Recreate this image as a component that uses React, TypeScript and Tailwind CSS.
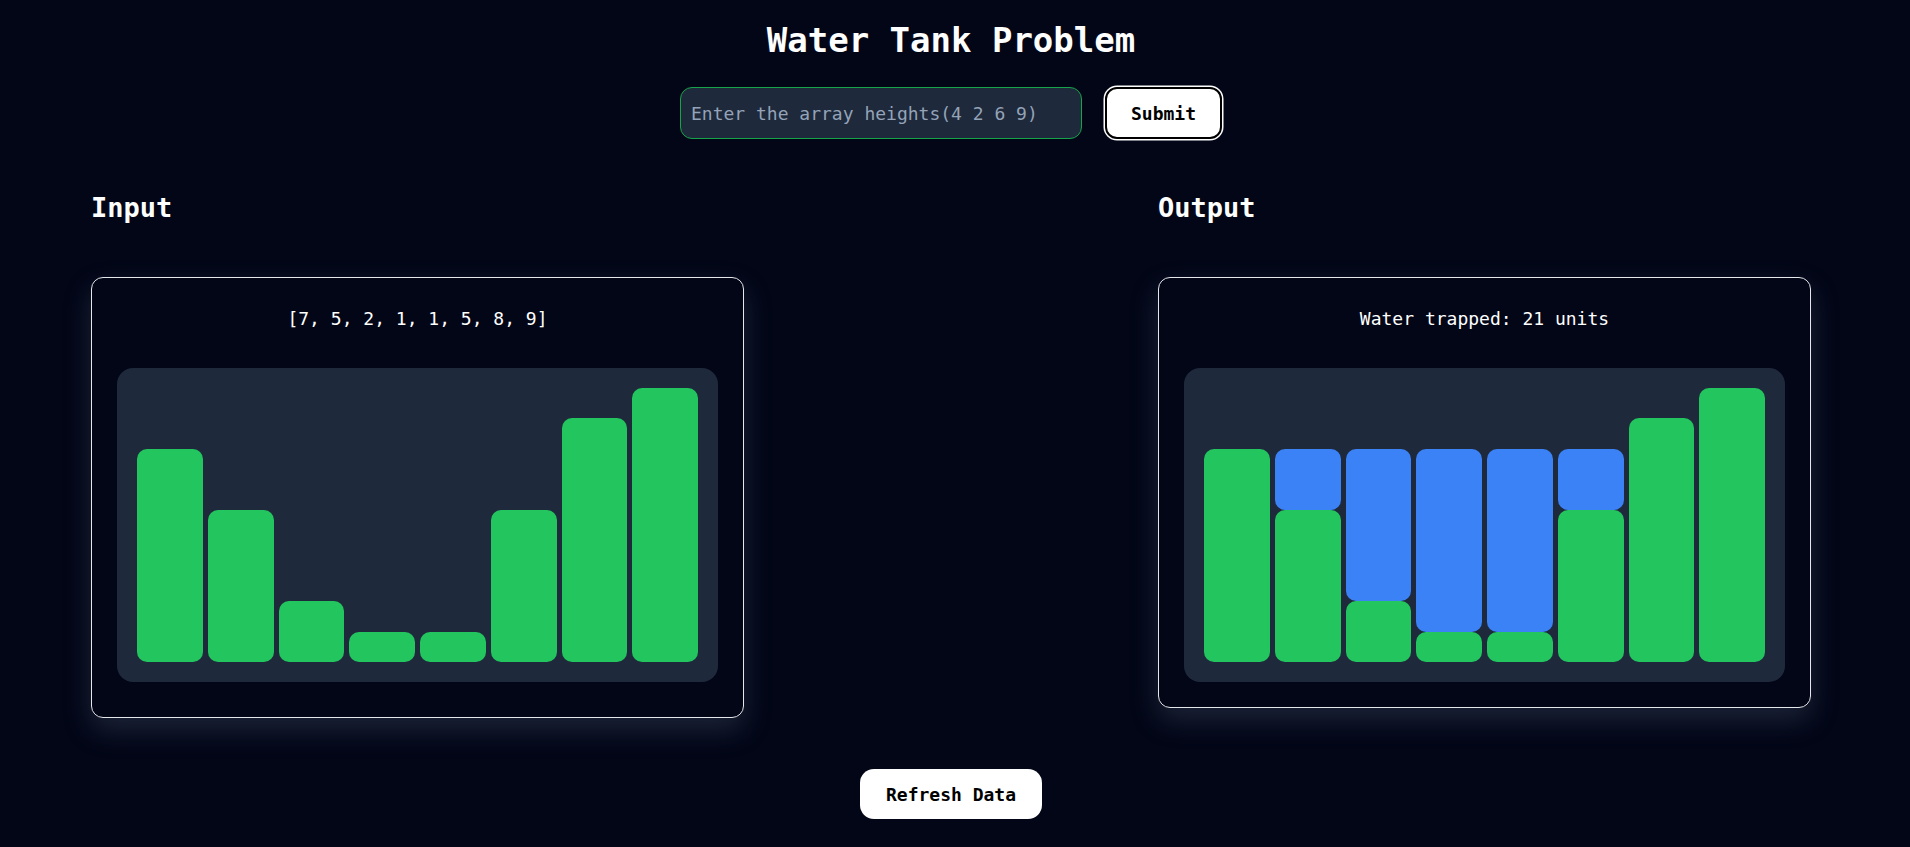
import React from "react";

const HEIGHTS = [7, 5, 2, 1, 1, 5, 8, 9];

function computeWater(h: number[]): number[] {
  const n = h.length;
  const left: number[] = new Array(n).fill(0);
  const right: number[] = new Array(n).fill(0);
  for (let i = 0; i < n; i++) left[i] = Math.max(i > 0 ? left[i - 1] : 0, h[i]);
  for (let i = n - 1; i >= 0; i--) right[i] = Math.max(i < n - 1 ? right[i + 1] : 0, h[i]);
  return h.map((v, i) => Math.min(left[i], right[i]) - v);
}

const font = { fontFamily: '"DejaVu Sans Mono", "Liberation Mono", monospace' };

export default function App() {
  const max = Math.max(...HEIGHTS);
  const water = computeWater(HEIGHTS);
  const total = water.reduce((a, b) => a + b, 0);

  return (
    <div className="min-h-screen w-full bg-[#020617] text-white" style={font}>
      <div className="w-[1902px] flex flex-col items-center pt-[20px] pb-[27px]">
        <h1 className="text-[34px] leading-[40px] font-bold text-white">Water Tank Problem</h1>

        <div className="mt-[27px] flex items-center gap-[23px]">
          <input
            type="text"
            placeholder="Enter the array heights(4 2 6 9)"
            className="w-[402px] h-[52px] rounded-xl border border-[#16a34a] bg-[#1e293b] px-[10px] text-[18px] text-white placeholder:text-[#94a3b8] outline-none"
            style={font}
          />
          <button
            className="h-[52px] px-[24px] rounded-xl bg-white border-2 border-black ring-[1.5px] ring-white text-black text-[18px] font-bold"
            style={font}
          >
            Submit
          </button>
        </div>

        <div className="w-full mt-[53px] flex justify-between px-[91px]">
          <div className="w-[653px] flex flex-col">
            <h2 className="text-[27px] leading-[32px] font-bold text-white">Input</h2>
            <div className="mt-[53px] rounded-xl border border-gray-200 px-[25px] pt-[27px] pb-[35px] shadow-[0_12px_28px_rgba(100,116,139,0.28)]">
              <p className="text-center text-[18px] leading-[27px] text-white">
                [{HEIGHTS.join(", ")}]
              </p>
              <div className="mt-[36px] h-[314px] rounded-2xl bg-[#1e293b] p-[20px] flex items-end gap-[5px]">
                {HEIGHTS.map((h, i) => (
                  <div
                    key={i}
                    className="flex-1 rounded-[10px] bg-[#22c55e]"
                    style={{ height: `${(h / max) * 100}%` }}
                  />
                ))}
              </div>
            </div>
          </div>

          <div className="w-[653px] flex flex-col">
            <h2 className="text-[27px] leading-[32px] font-bold text-white">Output</h2>
            <div className="mt-[53px] rounded-xl border border-gray-200 px-[25px] pt-[27px] pb-[25px] shadow-[0_12px_28px_rgba(100,116,139,0.28)]">
              <p className="text-center text-[18px] leading-[27px] text-white">
                Water trapped: {total} units
              </p>
              <div className="mt-[36px] h-[314px] rounded-2xl bg-[#1e293b] p-[20px] flex items-end gap-[5px]">
                {HEIGHTS.map((h, i) => (
                  <div key={i} className="flex-1 h-full flex flex-col justify-end">
                    {water[i] > 0 && (
                      <div
                        className="w-full rounded-[10px] bg-[#3b82f6]"
                        style={{ height: `${(water[i] / max) * 100}%` }}
                      />
                    )}
                    <div
                      className="w-full rounded-[10px] bg-[#22c55e]"
                      style={{ height: `${(h / max) * 100}%` }}
                    />
                  </div>
                ))}
              </div>
            </div>
          </div>
        </div>

        <button
          className="mt-[51px] h-[50px] px-[26px] rounded-[14px] bg-white text-black text-[18px] font-bold self-center"
          style={font}
        >
          Refresh Data
        </button>
      </div>
    </div>
  );
}
